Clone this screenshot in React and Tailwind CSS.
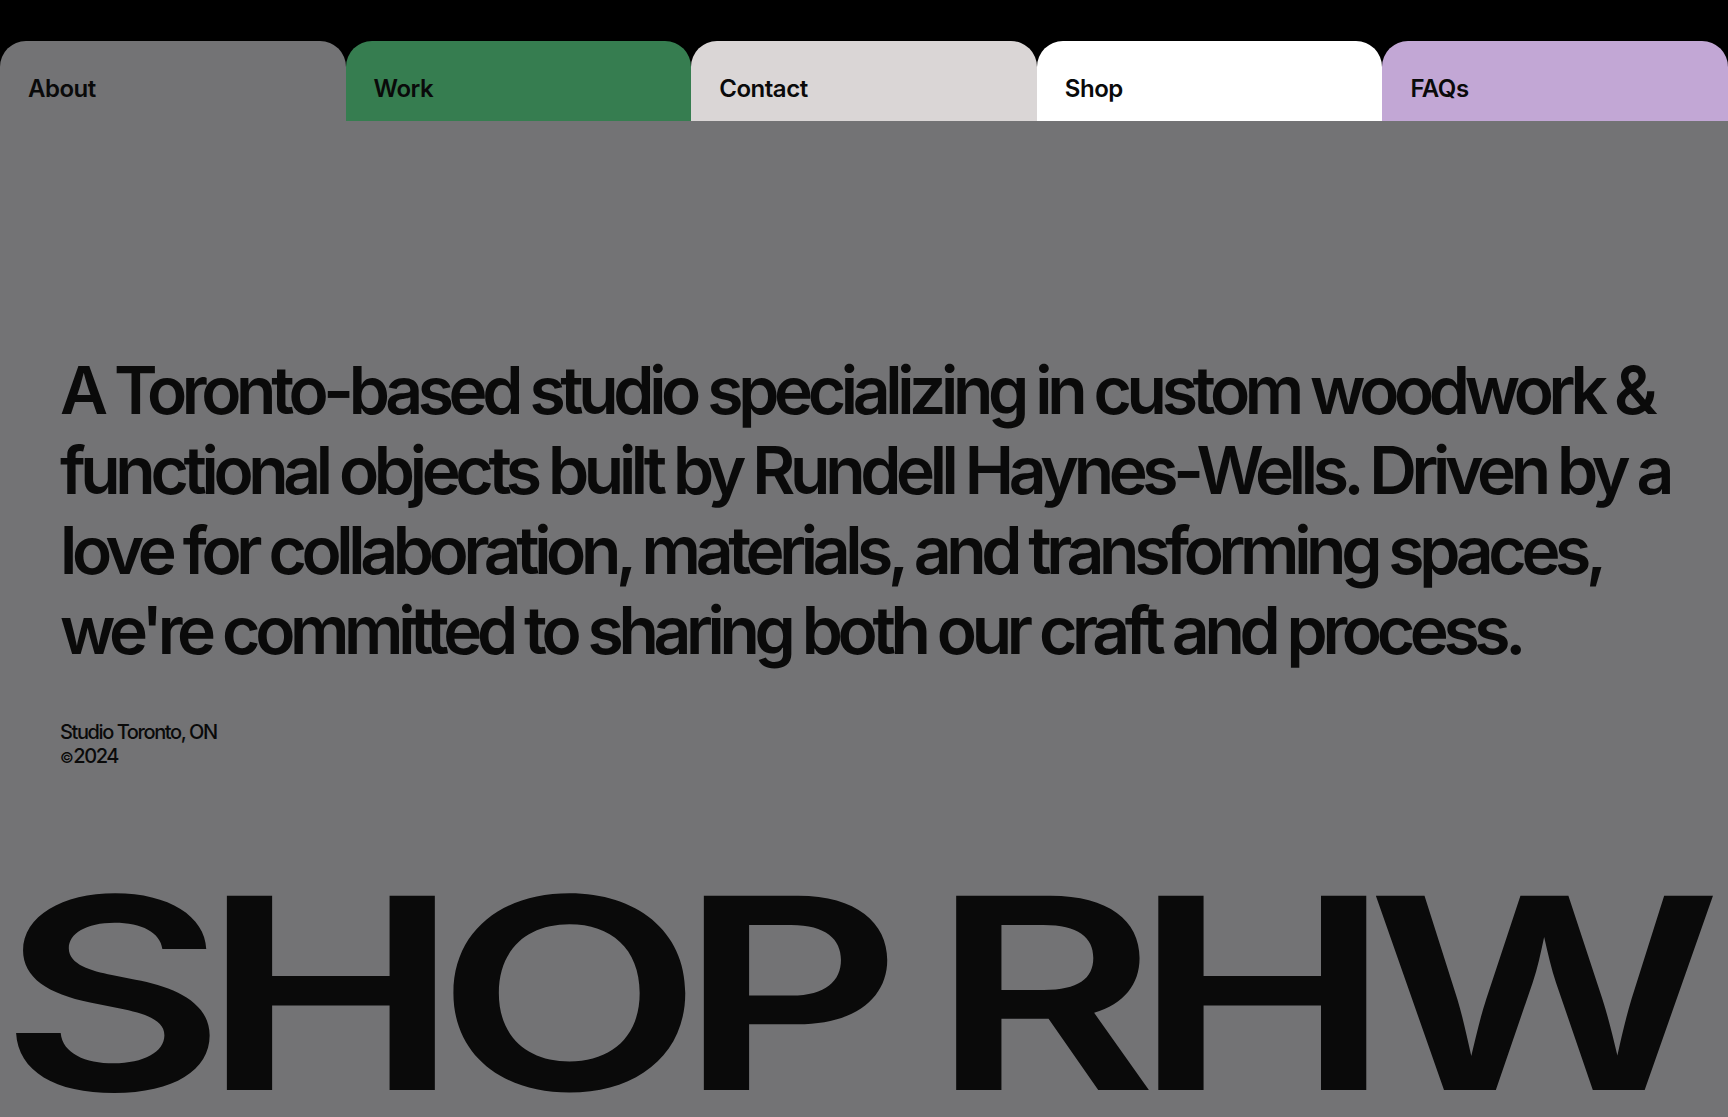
import React from 'react';

const tabs = [
    { label: 'About', bg: 'bg-[#737375]' },
    { label: 'Work', bg: 'bg-[#367d50]' },
    { label: 'Contact', bg: 'bg-[#dad6d6]' },
    { label: 'Shop', bg: 'bg-white' },
    { label: 'FAQs', bg: 'bg-[#c2a7d5]' },
];

const App = () => {
    return (
        <div className="min-h-screen bg-black font-['Inter',sans-serif] text-[#0a0a0a] overflow-hidden">
            <nav className="flex pt-[41px]">
                {tabs.map((tab) => (
                    <a
                        key={tab.label}
                        href="#"
                        className={`flex-1 h-[80px] rounded-t-[26px] px-[28px] pt-[34px] text-[24px] leading-[28px] font-semibold tracking-[-0.02em] ${tab.bg}`}
                    >
                        {tab.label}
                    </a>
                ))}
            </nav>

            <main className="bg-[#737375] h-[996px] overflow-hidden">
                <div className="pl-[60px] pr-[40px] pt-[229px]">
                    <p className="text-[66px] leading-[80px] font-semibold tracking-[-0.081em]">
                        A Toronto-based studio specializing in custom woodwork &amp; functional objects built by Rundell Haynes-Wells. Driven by a love for collaboration, materials, and transforming spaces, we're committed to sharing both our craft and process.
                    </p>
                    <div className="mt-[50px] text-[20px] leading-[24px] font-medium tracking-[-0.07em]">
                        <p>Studio Toronto, ON</p>
                        <p className="flex items-baseline">
                            <span className="text-[15px] mr-[1px]">©</span>2024
                        </p>
                    </div>
                </div>
                <h1 className="w-fit mt-[103px] text-[267px] leading-[0.9] font-semibold tracking-[-0.07em] [word-spacing:-0.03em] whitespace-nowrap origin-left scale-x-[1.3]">
                    SHOP RHW
                </h1>
            </main>
        </div>
    );
};

export default App;
